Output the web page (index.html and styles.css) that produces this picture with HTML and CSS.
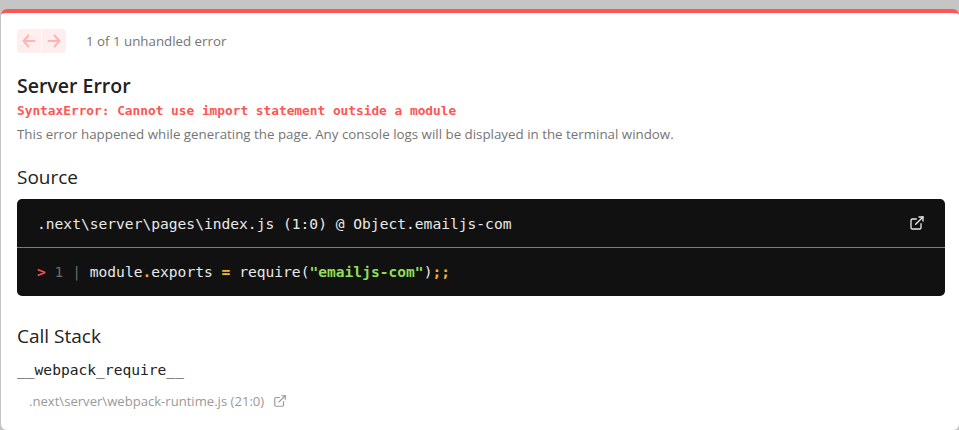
FILE: index.html
```html
<!DOCTYPE html>
<html lang="en">
<head>
<meta charset="utf-8">
<title>Server Error</title>
<link rel="stylesheet" href="styles.css">
</head>
<body>
<div class="dialog">
  <nav class="nav">
    <div class="nav-buttons">
      <span class="nav-btn"><svg viewBox="0 0 14 14" width="14" height="14" fill="none" stroke="currentColor" stroke-width="1.9" stroke-linecap="round" stroke-linejoin="round"><path d="M6.5 1.5 1.5 7l5 5.5M2 7H12.5"/></svg></span>
      <span class="nav-btn"><svg viewBox="0 0 14 14" width="14" height="14" fill="none" stroke="currentColor" stroke-width="1.9" stroke-linecap="round" stroke-linejoin="round"><path d="M7.5 1.5 12.5 7l-5 5.5M12 7H1.5"/></svg></span>
    </div>
    <span class="nav-count">1 of 1 unhandled error</span>
  </nav>
  <h1 class="title">Server Error</h1>
  <p class="message">SyntaxError: Cannot use import statement outside a module</p>
  <p class="note">This error happened while generating the page. Any console logs will be displayed in the terminal window.</p>
  <h2 class="heading source-heading">Source</h2>
  <div class="code">
    <div class="code-head">
      <span>.next\server\pages\index.js (1:0) @ Object.emailjs-com</span>
      <svg class="ext" viewBox="0 0 24 24" width="16" height="16" fill="none" stroke="currentColor" stroke-width="2" stroke-linecap="round" stroke-linejoin="round"><path d="M18 13v6a2 2 0 0 1-2 2H5a2 2 0 0 1-2-2V8a2 2 0 0 1 2-2h6"/><path d="M15 3h6v6"/><path d="M10 14 21 3"/></svg>
    </div>
    <div class="code-body"><span class="mark">&gt;</span> <span class="lineno">1 |</span> module<span class="punct">.</span>exports <span class="punct">=</span> require(<span class="str">"emailjs-com"</span>)<span class="punct">;;</span></div>
  </div>
  <h2 class="heading stack-heading">Call Stack</h2>
  <div class="frame-name">__webpack_require__</div>
  <div class="frame-loc">.next\server\webpack-runtime.js (21:0)<svg class="frame-ext" viewBox="0 0 24 24" width="14" height="14" fill="none" stroke="currentColor" stroke-width="2" stroke-linecap="round" stroke-linejoin="round"><path d="M18 13v6a2 2 0 0 1-2 2H5a2 2 0 0 1-2-2V8a2 2 0 0 1 2-2h6"/><path d="M15 3h6v6"/><path d="M10 14 21 3"/></svg></div>
</div>
</body>
</html>
```
FILE: styles.css
```css
html, body { margin: 0; height: 100%; overflow: hidden; }
body { background: #c5c5c5; padding: 9px 0 0 1px; box-sizing: border-box; }
.dialog {
  height: 100%; box-sizing: border-box; background: #fff; color: #222;
  border-top: 4px solid #ff5555; border-radius: 6px; padding: 16px 14px 0 16px;
  font-family: "Open Sans", "Noto Sans", sans-serif; overflow: hidden;
}
.nav { display: flex; align-items: center; height: 24px; }
.nav-buttons { display: flex; gap: 1px; }
.nav-btn { width: 24px; height: 24px; background: #ffeeee; color: #ffb3b3; display: flex; align-items: center; justify-content: center; }
.nav-btn:first-child { border-radius: 4px 0 0 4px; }
.nav-btn:last-child { border-radius: 0 4px 4px 0; }
.nav-count { margin-left: 20px; font-size: 13.3px; line-height: 26px; color: #757575; }
.title { margin: 20px 0 0; font-size: 19.5px; line-height: 26px; font-weight: 600; color: #222; }
.message { margin: 3px 0 0; font-family: "DejaVu Sans Mono", monospace; font-size: 12.8px; line-height: 18px; font-weight: 700; color: #ff5555; }
.note { margin: 5px 0 0; font-size: 13.33px; line-height: 18px; color: #757575; }
.heading { margin: 0; font-size: 19px; line-height: 24px; font-weight: 500; color: #222; }
.source-heading { margin-top: 22px; }
.code { margin-top: 10px; background: #111; border-radius: 5px; color: #e9e9e9; font-family: "DejaVu Sans Mono", monospace; font-size: 14.6px; }
.code-head { display: flex; align-items: center; justify-content: space-between; height: 48px; padding: 0 20px 0 20px; border-bottom: 1px solid #7a7a7a; }
.ext { flex: none; }
.code-body { height: 48px; line-height: 48px; padding-left: 20px; white-space: pre; }
.mark { color: #ff4d4d; font-weight: 700; }
.lineno { color: #6b6b6b; }
.punct { color: #f5b72a; font-weight: 700; }
.str { color: #8fdc5a; font-weight: 700; }
.stack-heading { margin-top: 28px; }
.frame-name { margin-top: 12px; font-family: "DejaVu Sans Mono", monospace; font-size: 14.6px; line-height: 20px; color: #222; }
.frame-loc { margin: 12px 0 0 12px; display: flex; align-items: center; gap: 9px; font-size: 13.1px; line-height: 18px; color: #999; }
.frame-ext { flex: none; }
```
